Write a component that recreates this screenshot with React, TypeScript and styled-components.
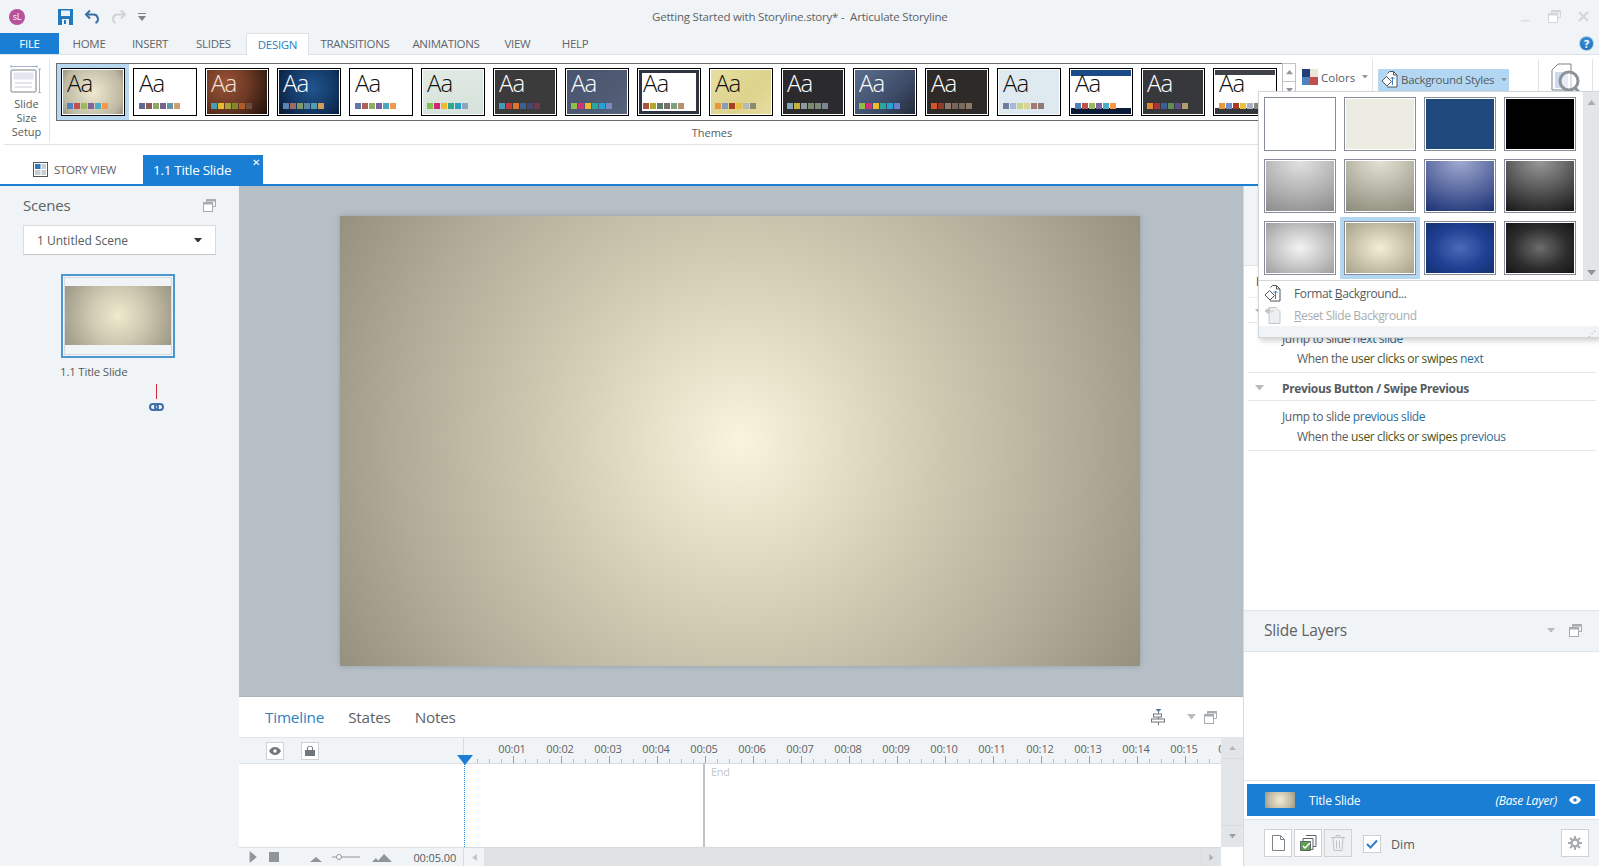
import React from 'react';
import styled, { createGlobalStyle } from 'styled-components';

const GlobalStyle = createGlobalStyle`
  html, body { margin: 0; padding: 0; height: 100%; overflow: hidden; }
  body { font-family: 'Open Sans', 'Liberation Sans', sans-serif; color: #565c61; }
  * { box-sizing: border-box; }
`;

const BLUE = '#1a7fd4';
const PANEL = '#f1f4f6';

const Page = styled.div`
  position: relative;
  width: 1599px;
  height: 866px;
  display: flex;
  flex-direction: column;
  background: #fff;
  overflow: hidden;
  font-size: 12px;
  letter-spacing: -0.3px;
`;

/* title bar */
const TitleBar = styled.div`
  height: 33px;
  flex: none;
  background: ${PANEL};
  display: grid;
  grid-template-columns: 652px 1fr auto;
  align-items: center;
`;
const QuickAccess = styled.div`
  display: flex;
  align-items: center;
  padding-left: 9px;
`;
const Avatar = styled.div`
  width: 16px;
  height: 16px;
  border-radius: 50%;
  background: #b9509f;
  color: #fff;
  font-size: 9px;
  line-height: 16px;
  text-align: center;
  margin-right: 33px;
`;
const QuickIcon = styled.span`
  display: flex;
  margin-right: 11px;
`;
const TitleText = styled.div`
  font-size: 11.5px;
  letter-spacing: -0.2px;
  color: #5d6266;
  white-space: pre;
`;
const WindowButtons = styled.div`
  display: flex;
  gap: 16px;
  padding-right: 9px;
  align-items: center;
`;

/* ribbon tabs */
const TabRow = styled.div`
  height: 22px;
  flex: none;
  background: ${PANEL};
  border-bottom: 1px solid #dfe2e4;
  display: flex;
  align-items: stretch;
  position: relative;
`;
const FileTab = styled.div`
  width: 59px;
  background: ${BLUE};
  color: #fff;
  font-size: 11.5px;
  display: flex;
  align-items: center;
  justify-content: center;
`;
const RibbonTab = styled.div<{ $w: number; $active?: boolean }>`
  width: ${(p) => p.$w}px;
  font-size: 11.5px;
  display: flex;
  align-items: center;
  justify-content: center;
  color: ${(p) => (p.$active ? '#2d7fc1' : '#5f656a')};
  background: ${(p) => (p.$active ? '#fff' : 'transparent')};
  height: ${(p) => (p.$active ? '22px' : 'auto')};
  border: ${(p) => (p.$active ? '1px solid #dfe2e4' : 'none')};
  border-bottom: none;
`;
const HelpBadge = styled.div`
  position: absolute;
  right: 5px;
  top: 3px;
  width: 15px;
  height: 15px;
  border-radius: 50%;
  background: radial-gradient(circle at 50% 35%, #3f97e0, #1664ad);
  border: 1px solid #a9cdea;
  color: #fff;
  font-weight: 700;
  font-size: 11px;
  line-height: 13px;
  text-align: center;
`;

/* ribbon */
const Ribbon = styled.div`
  height: 90px;
  flex: none;
  background: #fff;
  border-bottom: 1px solid #e2e5e7;
  display: flex;
  margin-left: 4px;
`;
const SetupGroup = styled.div`
  width: 46px;
  height: 84px;
  flex: none;
  margin-top: 4px;
  border-right: 1px solid #e2e5e7;
  display: flex;
  flex-direction: column;
  align-items: center;
  padding-top: 6px;
  font-size: 11px;
  line-height: 13.5px;
  letter-spacing: 0;
  text-align: center;
`;
const SetupLabel = styled.div`
  margin-top: 4px;
`;
const SetupCaption = styled.div`
  margin-top: 1px;
`;
const GroupCaption = styled.div`
  font-size: 11px;
  line-height: 14px;
  letter-spacing: 0;
  margin-top: 5px;
`;
const ThemesGroup = styled.div`
  width: 1322px;
  flex: none;
  padding: 8px 4px 0 6px;
  display: flex;
  flex-direction: column;
  align-items: center;
`;
const ThemeRow = styled.div`
  width: 100%;
  display: flex;
`;
const Gallery = styled.div`
  width: 1226px;
  flex: none;
  height: 58px;
  border: 1px solid #6a6a6a;
  border-right: none;
  display: flex;
  align-items: center;
  gap: 8px;
  padding-left: 4px;
  overflow: hidden;
`;
const ThemeCell = styled.div<{ $on?: boolean }>`
  flex: none;
  margin: ${(p) => (p.$on ? '0 -4px' : '0')};
  padding: ${(p) => (p.$on ? '4px' : '0')};
  background: ${(p) => (p.$on ? '#b9d8f0' : 'transparent')};
`;
const ThemeThumb = styled.div<{ $bg: string; $fg: string; $frame?: boolean }>`
  position: relative;
  width: 64px;
  height: 48px;
  border: 1px solid #000;
  outline: 1px solid #fff;
  outline-offset: -2px;
  background: ${(p) => p.$bg};
  color: ${(p) => p.$fg};
  box-shadow: ${(p) => (p.$frame ? 'inset 0 0 0 4px #2f3540' : 'none')};
  padding: 0 0 0 5px;
  font-size: 24px;
  line-height: 27px;
  letter-spacing: -1px;
  font-weight: 300;
`;
const SwatchRow = styled.div`
  position: absolute;
  left: 5px;
  bottom: 6px;
  display: flex;
  gap: 1px;
`;
const Swatch = styled.span<{ $c: string }>`
  width: 6px;
  height: 6px;
  background: ${(p) => p.$c};
`;
const Spinner = styled.div`
  width: 14px;
  height: 58px;
  flex: none;
  border: 1px solid #bfc3c6;
  display: flex;
  flex-direction: column;
`;
const SpinnerButton = styled.div`
  height: 18px;
  border-bottom: 1px solid #bfc3c6;
  display: flex;
  align-items: center;
  justify-content: center;
`;
const ColorsButton = styled.div`
  height: 28px;
  flex: none;
  margin-left: 6px;
  display: flex;
  align-items: center;
  gap: 3px;
  font-size: 11.5px;
  letter-spacing: 0;
`;
const Divider = styled.div`
  width: 1px;
  flex: none;
  height: 84px;
  margin-top: 4px;
  background: #e2e5e7;
`;
const StylesGroup = styled.div`
  width: 165px;
  flex: none;
  padding: 14px 0 0 5px;
`;
const StylesButton = styled.div`
  width: 131px;
  height: 22px;
  background: #b3d7f2;
  display: flex;
  align-items: center;
  gap: 3px;
  padding: 0 0 1px 3px;
  font-size: 11.5px;
  letter-spacing: -0.3px;
  white-space: nowrap;
`;
const PreviewGroup = styled.div`
  width: 53px;
  flex: none;
  padding: 7px 0 0 12px;
`;
const CaretGap = styled.span`
  display: flex;
  margin-left: 4px;
`;

/* slide tab strip */
const ViewStrip = styled.div`
  height: 41px;
  flex: none;
  background: #fff;
  border-bottom: 2px solid ${BLUE};
  display: flex;
  align-items: flex-end;
`;
const StoryViewTab = styled.div`
  width: 143px;
  height: 29px;
  padding-left: 33px;
  display: flex;
  align-items: center;
  gap: 6px;
  font-size: 11.5px;
  color: #5d6266;
`;
const SlideTab = styled.div`
  position: relative;
  width: 120px;
  height: 29px;
  background: ${BLUE};
  color: #fff;
  font-size: 13.5px;
  padding-left: 10px;
  display: flex;
  align-items: center;
`;
const CloseMark = styled.span`
  position: absolute;
  top: 2px;
  right: 3px;
  font-size: 10px;
  line-height: 10px;
`;

/* main area */
const Main = styled.div`
  flex: 1;
  min-height: 0;
  display: flex;
`;
const ScenesPanel = styled.div`
  width: 239px;
  flex: none;
  background: ${PANEL};
  padding: 8px 23px 0;
  display: flex;
  flex-direction: column;
`;
const PanelHeader = styled.div`
  display: flex;
  align-items: center;
  justify-content: space-between;
  font-size: 15px;
  color: #5d6266;
  letter-spacing: -0.2px;
  height: 22px;
`;
const SceneSelect = styled.div`
  margin-top: 9px;
  width: 193px;
  height: 30px;
  background: #fff;
  border: 1px solid #d8dbdd;
  border-bottom-color: #c4c7c9;
  padding: 0 13px;
  font-size: 12px;
  letter-spacing: 0;
  display: flex;
  align-items: center;
  justify-content: space-between;
`;
const SceneThumb = styled.div`
  margin: 19px 0 0 38px;
  width: 114px;
  height: 84px;
  border: 2px solid #4d97cf;
  padding: 1px;
  background: #f1f4f6;
  display: flex;
`;
const SceneThumbInner = styled.div`
  flex: 1;
  border: 1px solid #d8dbdd;
  padding: 8px 0 9px;
  display: flex;
`;
const SceneThumbImage = styled.div`
  flex: 1;
  background: radial-gradient(circle farthest-corner, #efe9cd 0, #cfc9b2 45%, #9b9684 100%);
`;
const SceneLabel = styled.div`
  margin: 6px 0 0 37px;
  font-size: 11.5px;
  letter-spacing: -0.2px;
`;
const SceneLink = styled.div`
  margin-left: 126px;
  margin-top: 5px;
  width: 14px;
  display: flex;
  flex-direction: column;
  align-items: center;
`;
const RedLine = styled.div`
  width: 1px;
  height: 15px;
  background: #d02a36;
  margin-bottom: 4px;
`;

const Center = styled.div`
  width: 1004px;
  flex: none;
  display: flex;
  flex-direction: column;
`;
const Stage = styled.div`
  height: 511px;
  flex: none;
  background: #b6bec6;
  padding: 30px 0 0 101px;
  border-bottom: 1px solid #a9b1b9;
`;
const Slide = styled.div`
  width: 800px;
  height: 450px;
  background: radial-gradient(circle farthest-corner, #f8f4dd 0, #e5e0c8 20%, #cdc7b0 45%, #b0ab97 75%, #96917f 100%);
  box-shadow: 0 0 5px rgba(90, 96, 104, 0.35);
`;

/* timeline */
const TimelinePanel = styled.div`
  flex: 1;
  min-height: 0;
  display: flex;
  flex-direction: column;
  background: #fff;
`;
const TimelineTabs = styled.div`
  height: 40px;
  flex: none;
  display: flex;
  align-items: center;
  padding: 0 26px;
  gap: 24px;
  font-size: 15.3px;
  letter-spacing: -0.2px;
`;
const TimelineTab = styled.div<{ $active?: boolean }>`
  color: ${(p) => (p.$active ? '#2d7fc1' : '#5d6266')};
`;
const TimelineTools = styled.div`
  margin-left: auto;
  display: flex;
  align-items: center;
  gap: 21px;
`;
const ToolPair = styled.div<{ $gap?: number }>`
  display: flex;
  align-items: center;
  gap: ${(p) => p.$gap ?? 8}px;
`;
const TimelineGrid = styled.div`
  position: relative;
  flex: 1;
  min-height: 0;
  display: grid;
  grid-template-columns: 225px 757px 22px;
  grid-template-rows: 27px 83px 1fr;
`;
const TrackHead = styled.div`
  grid-column: 1;
  grid-row: 1;
  background: ${PANEL};
  border-top: 1px solid #e2e5e7;
  border-bottom: 1px solid #e2e5e7;
  border-right: 1px solid #d8dbdd;
  padding: 4px 0 0 27px;
  display: flex;
  gap: 17px;
`;
const SquareToggle = styled.div`
  width: 18px;
  height: 18px;
  background: #fff;
  border: 1px solid #cfd2d4;
  display: flex;
  align-items: center;
  justify-content: center;
`;
const Ruler = styled.div`
  grid-column: 2;
  grid-row: 1;
  background: ${PANEL};
  border-top: 1px solid #e2e5e7;
  border-bottom: 1px solid #d8dbdd;
  overflow: hidden;
  display: flex;
  flex-direction: column;
`;
const RulerLabels = styled.div`
  display: flex;
  padding: 4px 0 0 24px;
  height: 18px;
  flex: none;
`;
const RulerLabel = styled.span`
  flex: none;
  width: 48px;
  text-align: center;
  font-size: 11px;
  letter-spacing: -0.1px;
  line-height: 14px;
  color: #5d6266;
`;
const ScrollTop = styled.div`
  grid-column: 3;
  grid-row: 1 / span 2;
  background: #e3e6e8;
  border-top: 1px solid #e2e5e7;
  display: flex;
  flex-direction: column;
  justify-content: space-between;
`;
const ScrollCap = styled.div`
  height: 21px;
  display: flex;
  align-items: center;
  justify-content: center;
  border-bottom: 1px solid #d8dbdd;
  &:last-child { border-bottom: none; border-top: 1px solid #d8dbdd; height: 22px; }
`;
const TrackBody = styled.div`
  grid-column: 1 / span 2;
  grid-row: 2;
  background: #fff;
`;
const Playhead = styled.div`
  position: absolute;
  left: 225px;
  top: 21px;
  bottom: 19px;
  border-left: 1px dotted #1a7fd4;
`;
const PlayheadCap = styled.div`
  position: absolute;
  left: 218px;
  top: 18px;
  width: 0;
  height: 0;
  border-left: 8px solid transparent;
  border-right: 8px solid transparent;
  border-top: 10px solid ${BLUE};
`;
const EndMarker = styled.div`
  position: absolute;
  left: 464px;
  top: 26px;
  bottom: 19px;
  width: 2px;
  background: #bfc3c6;
`;
const EndLabel = styled.div`
  position: absolute;
  left: 472px;
  top: 27px;
  font-size: 11px;
  color: #c4c7ca;
`;
const TransportBar = styled.div`
  grid-column: 1;
  grid-row: 3;
  background: ${PANEL};
  border-top: 1px solid #dfe2e4;
  border-right: 1px solid #d8dbdd;
  display: flex;
  align-items: center;
  padding-left: 10px;
  overflow: hidden;
`;
const StopIcon = styled.svg`
  margin-left: 12px;
  flex: none;
`;
const ZoomIcon = styled.svg`
  margin-left: 31px;
  flex: none;
`;
const TransportTime = styled.span`
  margin-left: 21px;
  font-size: 11px;
  letter-spacing: -0.1px;
`;
const HScroll = styled.div`
  grid-column: 2;
  grid-row: 3;
  background: #e0e3e5;
  border-top: 1px solid #d8dbdd;
  display: flex;
  justify-content: space-between;
`;
const HScrollCap = styled.div`
  width: 20px;
  background: ${PANEL};
  display: flex;
  align-items: center;
  justify-content: center;
  &:last-child { background: #e0e3e5; border-left: 1px solid #d8dbdd; }
`;

/* right column */
const RightPanel = styled.div`
  flex: 1;
  min-width: 0;
  display: flex;
  flex-direction: column;
  background: #fff;
  border-left: 1px solid #d8dbdd;
`;
const TriggerTop = styled.div`
  height: 80px;
  flex: none;
  background: ${PANEL};
  border-bottom: 1px solid #e2e5e7;
`;
const TriggerArea = styled.div`
  height: 344px;
  flex: none;
  padding: 0 3px 0 4px;
  background: #fff;
`;
const TriggerHeading = styled.div`
  height: 32px;
  font-weight: 700;
  padding-left: 8px;
  display: flex;
  align-items: center;
  border-bottom: 1px solid #eceef0;
`;
const TriggerRow = styled.div<{ $h: number }>`
  height: ${(p) => p.$h}px;
  display: flex;
  align-items: center;
  gap: 18px;
  padding: 3px 0 0 7px;
  font-weight: 700;
  font-size: 12px;
  letter-spacing: -0.35px;
  border-bottom: 1px solid #e6e8ea;
`;
const TriggerBody = styled.div`
  height: 50px;
  padding: 6px 0 0 34px;
  border-bottom: 1px solid #e6e8ea;
  line-height: 20px;
  font-size: 12px;
  letter-spacing: -0.35px;
`;
const TriggerSub = styled.div`
  padding-left: 15px;
`;
const Teal = styled.span`
  color: #2e6c99;
`;
const Olive = styled.span`
  color: #44531a;
`;
const LayersHeader = styled.div`
  height: 42px;
  flex: none;
  margin-top: auto;
  background: ${PANEL};
  border-top: 1px solid #e2e5e7;
  border-bottom: 1px solid #e2e5e7;
  display: flex;
  align-items: center;
  justify-content: space-between;
  padding: 0 17px 2px 20px;
  font-size: 15.5px;
  letter-spacing: -0.2px;
  color: #5d6266;
`;
const LayersBody = styled.div`
  height: 129px;
  flex: none;
  border-bottom: 1px solid #e2e5e7;
`;
const LayerRow = styled.div`
  height: 32px;
  flex: none;
  margin: 3px 4px 3px 3px;
  background: ${BLUE};
  color: #fff;
  display: flex;
  align-items: center;
  padding: 0 14px 0 18px;
  font-size: 12px;
  letter-spacing: -0.2px;
`;
const LayerThumb = styled.div`
  width: 30px;
  height: 16px;
  background: radial-gradient(circle, #f1ecd2 0, #bdb8a2 70%, #99947f 100%);
  margin-right: 14px;
`;
const LayerNote = styled.em`
  margin-left: auto;
  margin-right: 12px;
`;
const LayerTools = styled.div`
  flex: 1;
  background: ${PANEL};
  border-top: 1px solid #e2e5e7;
  display: flex;
  align-items: flex-start;
  padding: 9px 10px 0 20px;
  gap: 2px;
`;
const ToolButton = styled.div<{ $pressed?: boolean }>`
  width: 28px;
  height: 28px;
  background: ${(p) => (p.$pressed ? '#eef0f1' : '#fff')};
  border: 1px solid #cfd2d4;
  display: flex;
  align-items: center;
  justify-content: center;
`;
const DimCheck = styled.div`
  width: 18px;
  height: 18px;
  margin: 6px 0 0 9px;
  background: #fff;
  border: 1px solid #cfd2d4;
  display: flex;
  align-items: center;
  justify-content: center;
`;
const DimLabel = styled.span`
  margin: 7px 0 0 8px;
  font-size: 12.5px;
  letter-spacing: 0;
`;
const GearButton = styled(ToolButton)`
  margin-left: auto;
`;

/* background styles dropdown */
const Dropdown = styled.div`
  position: absolute;
  left: 1258px;
  top: 91px;
  width: 341px;
  height: 247px;
  background: #fff;
  border: 1px solid #d4d7d9;
  border-right: none;
  box-shadow: 2px 3px 5px rgba(0, 0, 0, 0.18);
  display: flex;
  flex-direction: column;
`;
const StyleArea = styled.div`
  height: 189px;
  flex: none;
  border-bottom: 1px solid #d4d7d9;
  display: flex;
`;
const StyleGrid = styled.div`
  width: 324px;
  flex: none;
  padding: 5px 0 0 5px;
  display: grid;
  grid-template-columns: repeat(4, 72px);
  grid-auto-rows: 54px;
  column-gap: 8px;
  row-gap: 8px;
`;
const StyleCell = styled.div<{ $on?: boolean }>`
  position: relative;
  &::before {
    content: '';
    display: ${(p) => (p.$on ? 'block' : 'none')};
    position: absolute;
    inset: -4px;
    background: #b3d7f2;
  }
`;
const StyleThumb = styled.div<{ $bg: string }>`
  position: relative;
  height: 100%;
  border: 1px solid #878d99;
  outline: 1px solid #fff;
  outline-offset: -2px;
  background: ${(p) => p.$bg};
`;
const StyleScroll = styled.div`
  flex: 1;
  background: #e3e6e8;
  display: flex;
  flex-direction: column;
  justify-content: space-between;
  align-items: center;
  padding: 8px 0 5px;
`;
const MenuItem = styled.div<{ $off?: boolean }>`
  height: 22px;
  display: flex;
  align-items: center;
  padding-left: 5px;
  font-size: 12px;
  letter-spacing: -0.38px;
  color: ${(p) => (p.$off ? '#a9adb0' : '#565c61')};
`;
const MenuIcon = styled.span`
  width: 30px;
  flex: none;
  display: flex;
`;
const MenuList = styled.div`
  padding-top: 1px;
  flex: 1;
`;
const Grip = styled.div`
  height: 11px;
  flex: none;
  background: ${PANEL};
  display: flex;
  justify-content: flex-end;
  align-items: flex-end;
  font-size: 8px;
  line-height: 9px;
  color: #9aa0a4;
  padding-right: 3px;
`;

const DownCaret = ({ c = '#8f959a', w = 7 }: { c?: string; w?: number }) => (
  <svg width={w} height={w * 0.6} viewBox="0 0 10 6"><path d="M0 0h10L5 6z" fill={c} /></svg>
);
const UpCaret = ({ c = '#8f959a', w = 7 }: { c?: string; w?: number }) => (
  <svg width={w} height={w * 0.6} viewBox="0 0 10 6"><path d="M0 6h10L5 0z" fill={c} /></svg>
);
const RightCaret = ({ c = '#9aa0a4', h = 7 }: { c?: string; h?: number }) => (
  <svg width={h * 0.7} height={h} viewBox="0 0 6 10"><path d="M0 0v10l6-5z" fill={c} /></svg>
);
const FloatIcon = ({ c = '#a6abaf' }: { c?: string }) => (
  <svg width="13" height="13" viewBox="0 0 13 13" fill="none" stroke={c} strokeWidth="1">
    <path d="M3.500 3V.5h9v7H10" />
    <path d="M3.500 1.500h9" strokeWidth="2" />
    <rect x=".5" y="3.500" width="9" height="9" fill="#fff" />
    <path d="M.5 4.500h9" strokeWidth="2" />
  </svg>
);
const EyeIcon = ({ c = '#6f777d' }: { c?: string }) => (
  <svg width="12" height="8" viewBox="0 0 12 8">
    <path d="M0 4c1.600-2.600 3.600-4 6-4s4.400 1.400 6 4c-1.600 2.600-3.600 4-6 4S1.600 6.600 0 4z" fill={c} />
    <circle cx="6" cy="4" r="1.700" fill={c === '#fff' ? BLUE : '#fff'} />
  </svg>
);
const BucketIcon = () => (
  <svg width="17" height="17" viewBox="0 0 17 17" fill="none" stroke="#4f5559" strokeWidth="1">
    <path d="M6.500 2.500l2-2h4l3.500 3.500v12H6" fill="#fff" />
    <path d="M12.500 .5v3.500H16" />
    <path d="M5.500 5.500l5 5-4.500 4.500-5-5z" fill="#fff" />
    <path d="M11.500 6v8M9.500 8l2-2 2 2" stroke="#3f7fbf" />
  </svg>
);

const themeAccent = ['#4f81bd', '#c0504d', '#9bbb59', '#8064a2', '#4bacc6', '#f79646'];
const themes: { bg: string; fg: string; sw: string[]; frame?: boolean }[] = [
  { bg: 'radial-gradient(circle, #eee9cf 0, #bdb8a2 75%, #8e8a78 100%)', fg: '#111', sw: themeAccent },
  { bg: '#fff', fg: '#111', sw: ['#5c6b8f', '#8e5a55', '#8fa768', '#75658f', '#5e97a8', '#cf9f6d'] },
  { bg: 'radial-gradient(circle at 30% 30%, #9a5236 0, #6e3a25 45%, #1a0e08 100%)', fg: '#f4e6dc', sw: ['#45a0b5', '#e8b932', '#a6a23a', '#7d8a30', '#b05a28', '#6c4e40'] },
  { bg: 'radial-gradient(circle at 55% 40%, #21558f 0, #133a68 50%, #08162b 100%)', fg: '#fff', sw: ['#5b85b0', '#9f6a60', '#7f9a6a', '#5f86a0', '#4f9fb0', '#d99a55'] },
  { bg: '#fff', fg: '#111', sw: ['#5f79ac', '#b0605a', '#92ad5e', '#7d62a0', '#4ca6bf', '#eb9a4f'] },
  { bg: 'linear-gradient(170deg, #e1ebe4, #d5e1da)', fg: '#111', sw: ['#7fbf4e', '#d6237c', '#f0b92c', '#2fa88f', '#2a9fc4', '#8fa3c2'] },
  { bg: '#3b3b3b', fg: '#fff', sw: ['#3f9cbd', '#c63a3a', '#e2742a', '#3d5f92', '#3f4a70', '#6f3a48'] },
  { bg: 'linear-gradient(135deg, #4a5670, #4e5a72 60%, #58647c)', fg: '#fff', sw: ['#8cc04a', '#d3307e', '#f2b92a', '#29a6a0', '#20a4d4', '#7d88bd'] },
  { bg: '#fff', fg: '#111', sw: ['#a9553e', '#b3a72e', '#5c7d6a', '#78706a', '#7ea07e', '#b98f6c'], frame: true },
  { bg: 'linear-gradient(135deg, #e8de9f, #ddd38e 60%, #e6dca0)', fg: '#111', sw: ['#e8963a', '#7f9fbd', '#a8401e', '#e8c13e', '#b4b8b8', '#8a8a70'] },
  { bg: '#2b2b2d', fg: '#fff', sw: ['#7fa6b8', '#c2b23a', '#8c9aa2', '#7b8c66', '#7d8a78', '#7a8595'] },
  { bg: 'linear-gradient(135deg, #5a6f90, #3e4c68 60%, #232b3c)', fg: '#fff', sw: ['#8cc04a', '#d3307e', '#f2b92a', '#29a6a0', '#20a4d4', '#6a80c8'] },
  { bg: '#2e2a28', fg: '#fff', sw: ['#d4552a', '#8e3a2c', '#8a7a70', '#7d6458', '#7a6a5e', '#8c7a68'] },
  { bg: '#dfe9f0', fg: '#111', sw: ['#6f7ea0', '#a9b9d4', '#c9d38c', '#dcd493', '#a67870', '#8f7a78'] },
  { bg: 'linear-gradient(#1c4a86 0 7px, #fff 7px 39px, #0b1b38 39px)', fg: '#111', sw: themeAccent },
  { bg: '#37383b', fg: '#fff', sw: ['#e08a2c', '#a8343a', '#3d5f92', '#5f8f54', '#5a4f80', '#b0a070'] },
  { bg: 'linear-gradient(#3f4249 0 6px, #fff 6px 39px, #33363b 39px)', fg: '#111', sw: ['#e89a3a', '#6f8fc8', '#a83a2a', '#e8c13e', '#a8b2c0', '#8a8a80'] },
];

const grad = (a: string, b: string, c: string) => `radial-gradient(ellipse at 50% 50%, ${a} 0, ${b} 55%, ${c} 100%)`;
const top = (a: string, b: string) => `radial-gradient(ellipse 95% 110% at 50% 0, ${a} 0, ${b} 100%)`;
const backgroundStyles = [
  '#fff',
  '#edece2',
  '#1f497d',
  '#000',
  top('#e4e4e4', '#8e8e8e'),
  top('#e4e3d5', '#8f8d7c'),
  top('#a3abd2', '#1f3578'),
  top('#9b9b9b', '#1b1b1b'),
  grad('#f4f4f4', '#c4c4c4', '#9b9b9b'),
  grad('#f3eed3', '#c8c2a9', '#a39e8a'),
  grad('#4c6bb8', '#1f3f92', '#14306f'),
  grad('#6c6c6c', '#2e2e2e', '#141414'),
];

const seconds = Array.from({ length: 16 }, (_, i) => `00:${String(i + 1).padStart(2, '0')}`);
const rulerTicks = Array.from({ length: 64 }, (_, i) => i);

export default function App() {
  return (
    <Page>
      <GlobalStyle />
      <TitleBar>
        <QuickAccess>
          <Avatar>sL</Avatar>
          <QuickIcon>
            <svg width="15" height="16" viewBox="0 0 15 16">
              <path d="M0 0h15v16H0z" fill="#2278bd" />
              <path d="M3 1.500h9v5.500H3z" fill="#eaf2f8" />
              <path d="M4 10h7v6H4z" fill="#eaf2f8" />
              <path d="M6 11h2v4H6z" fill="#2278bd" />
            </svg>
          </QuickIcon>
          <QuickIcon>
            <svg width="16" height="16" viewBox="0 0 16 16" fill="none" stroke="#3a6ea5" strokeWidth="2">
              <path d="M2.500 5.500h7a4.500 4.500 0 0 1 2 8.500" />
              <path d="M6 1.500l-4 4 4 4" />
            </svg>
          </QuickIcon>
          <QuickIcon>
            <svg width="16" height="16" viewBox="0 0 16 16" fill="none" stroke="#cfd3d6" strokeWidth="2">
              <path d="M13.500 5.500h-7a4.500 4.500 0 0 0-2 8.500" />
              <path d="M10 1.500l4 4-4 4" />
            </svg>
          </QuickIcon>
          <svg width="8" height="8" viewBox="0 0 8 8"><path d="M0 0h8v1H0zM0 3h8L4 8z" fill="#7d8387" /></svg>
        </QuickAccess>
        <TitleText>Getting Started with Storyline.story* -  Articulate Storyline</TitleText>
        <WindowButtons>
          <svg width="13" height="13" viewBox="0 0 13 13"><path d="M2 10h9v1.500H2z" fill="#dcdfe1" /></svg>
          <FloatIcon c="#d3d6d8" />
          <svg width="13" height="13" viewBox="0 0 13 13" stroke="#d3d6d8" strokeWidth="2.200"><path d="M2 2l9 9M11 2l-9 9" /></svg>
        </WindowButtons>
      </TitleBar>

      <TabRow>
        <FileTab>FILE</FileTab>
        <RibbonTab $w={60}>HOME</RibbonTab>
        <RibbonTab $w={62}>INSERT</RibbonTab>
        <RibbonTab $w={65}>SLIDES</RibbonTab>
        <RibbonTab $w={63} $active>DESIGN</RibbonTab>
        <RibbonTab $w={92}>TRANSITIONS</RibbonTab>
        <RibbonTab $w={90}>ANIMATIONS</RibbonTab>
        <RibbonTab $w={53}>VIEW</RibbonTab>
        <RibbonTab $w={62}>HELP</RibbonTab>
        <HelpBadge>?</HelpBadge>
      </TabRow>

      <Ribbon>
        <SetupGroup>
          <svg width="33" height="28" viewBox="0 0 33 28" fill="none">
            <path d="M1 1.500h26M1 0v3M27 0v3M29.500 4v24M28 4h3M28 27.500h3" stroke="#9fb4cc" />
            <rect x="1" y="5" width="25" height="22" rx="1" stroke="#7d8387" />
            <rect x="3.500" y="7.500" width="20" height="7" fill="#e3e6ee" />
            <path d="M5 18h17M5 22h17" stroke="#c9ccd1" />
          </svg>
          <SetupLabel>Slide<br />Size</SetupLabel>
          <SetupCaption>Setup</SetupCaption>
        </SetupGroup>
        <ThemesGroup>
          <ThemeRow>
            <Gallery>
              {themes.map((t, i) => (
                <ThemeCell key={i} $on={i === 0}>
                  <ThemeThumb $bg={t.bg} $fg={t.fg} $frame={t.frame}>
                    Aa
                    <SwatchRow>
                      {t.sw.map((c, k) => <Swatch key={k} $c={c} />)}
                    </SwatchRow>
                  </ThemeThumb>
                </ThemeCell>
              ))}
            </Gallery>
            <Spinner>
              <SpinnerButton><UpCaret /></SpinnerButton>
              <SpinnerButton><DownCaret /></SpinnerButton>
            </Spinner>
            <ColorsButton>
              <svg width="16" height="16" viewBox="0 0 16 16">
                <path d="M0 0h8v8H0z" fill="#1f3f78" />
                <path d="M8 0h8v8H8z" fill="#eee5da" />
                <path d="M0 8h8v8H0z" fill="#4f81bd" />
                <path d="M8 8h8v8H8z" fill="#c0504d" />
              </svg>
              Colors
              <CaretGap><DownCaret w={6} /></CaretGap>
            </ColorsButton>
          </ThemeRow>
          <GroupCaption>Themes</GroupCaption>
        </ThemesGroup>
        <Divider />
        <StylesGroup>
          <StylesButton>
            <BucketIcon />
            Background Styles
            <CaretGap><DownCaret w={6} /></CaretGap>
          </StylesButton>
        </StylesGroup>
        <Divider />
        <PreviewGroup>
          <svg width="32" height="36" viewBox="0 0 32 36" fill="none">
            <path d="M1 8l6-6h13v26H1z" fill="#fff" stroke="#7d8387" />
            <path d="M4 10h13v16H4z" fill="#cfd9ee" />
            <circle cx="18" cy="19" r="9" fill="#fff" fillOpacity=".5" stroke="#8d9399" strokeWidth="3" />
            <path d="M24 26l7 7" stroke="#8d9399" strokeWidth="3" />
          </svg>
        </PreviewGroup>
        <Divider />
      </Ribbon>

      <ViewStrip>
        <StoryViewTab>
          <svg width="15" height="15" viewBox="0 0 15 15">
            <rect x=".5" y=".5" width="14" height="14" fill="#fff" stroke="#4f5559" />
            <path d="M2 2h5.500v5H2z" fill="#2a79bd" />
            <path d="M8.500 2H13v5H8.500z" fill="#c9ccd1" />
            <path d="M2 8h5.500v5H2zM8.500 8H13v5H8.500z" fill="#c9ccd1" />
          </svg>
          STORY VIEW
        </StoryViewTab>
        <SlideTab>
          1.1 Title Slide
          <CloseMark>✕</CloseMark>
        </SlideTab>
      </ViewStrip>

      <Main>
        <ScenesPanel>
          <PanelHeader>Scenes<FloatIcon /></PanelHeader>
          <SceneSelect>1 Untitled Scene<DownCaret c="#33383c" w={8} /></SceneSelect>
          <SceneThumb>
            <SceneThumbInner><SceneThumbImage /></SceneThumbInner>
          </SceneThumb>
          <SceneLabel>1.1 Title Slide</SceneLabel>
          <SceneLink>
            <RedLine />
            <svg width="15" height="8" viewBox="0 0 15 8" fill="none" stroke="#3f6fa8" strokeWidth="2">
              <rect x="1" y="1" width="8" height="6" rx="3" />
              <rect x="6" y="1" width="8" height="6" rx="3" />
            </svg>
          </SceneLink>
        </ScenesPanel>

        <Center>
          <Stage><Slide /></Stage>
          <TimelinePanel>
            <TimelineTabs>
              <TimelineTab $active>Timeline</TimelineTab>
              <TimelineTab>States</TimelineTab>
              <TimelineTab>Notes</TimelineTab>
              <TimelineTools>
                <svg width="15" height="16" viewBox="0 0 15 16" fill="none" stroke="#6f777d">
                  <path d="M7.500 2v14" />
                  <path d="M4.500 0h6L7.500 3z" fill="#4f75a8" stroke="none" />
                  <rect x="2.500" y="5" width="8" height="3" fill="#fff" />
                  <rect x=".5" y="10" width="13" height="3" fill="#fff" />
                </svg>
                <ToolPair>
                  <DownCaret w={9} c="#b8bcc0" />
                  <FloatIcon />
                </ToolPair>
              </TimelineTools>
            </TimelineTabs>
            <TimelineGrid>
              <TrackHead>
                <SquareToggle><EyeIcon /></SquareToggle>
                <SquareToggle>
                  <svg width="10" height="10" viewBox="0 0 10 10" fill="#6f777d">
                    <path d="M0 4h10v6H0z" />
                    <path d="M2.500 4V2a2.500 2 0 0 1 5 0v2" fill="none" stroke="#6f777d" />
                  </svg>
                </SquareToggle>
              </TrackHead>
              <Ruler>
                <RulerLabels>
                  {seconds.map((s) => <RulerLabel key={s}>{s}</RulerLabel>)}
                </RulerLabels>
                <svg width="757" height="7" viewBox="0 0 757 7">
                  {rulerTicks.map((i) => (
                    <rect key={i} x={i * 12 + 1} y={i % 4 === 0 ? 0 : 3} width="1" height={i % 4 === 0 ? 7 : 4} fill={i % 4 === 0 ? '#9aa0a4' : '#b8bcc0'} />
                  ))}
                </svg>
              </Ruler>
              <ScrollTop>
                <ScrollCap><UpCaret c="#b0b5b9" /></ScrollCap>
                <ScrollCap><DownCaret c="#9aa0a4" /></ScrollCap>
              </ScrollTop>
              <TrackBody />
              <TransportBar>
                <RightCaret c="#8f959a" h={12} />
                <StopIcon width="10" height="10" viewBox="0 0 10 10"><path d="M0 0h10v10H0z" fill="#8f959a" /></StopIcon>
                <ZoomIcon width="82" height="12" viewBox="0 0 82 12" fill="#8f959a">
                  <path d="M0 11l6-5 6 5z" />
                  <circle cx="29" cy="6" r="2.500" fill="#fff" stroke="#8f959a" />
                  <path d="M22 6h4M32 6h18" stroke="#8f959a" />
                  <path d="M62 11l4-4 3 4zM67 11l7-8 8 8z" />
                </ZoomIcon>
                <TransportTime>00:05.00</TransportTime>
              </TransportBar>
              <HScroll>
                <HScrollCap><svg width="5" height="7" viewBox="0 0 5 7"><path d="M5 0v7L0 3.500z" fill="#c3c7ca" /></svg></HScrollCap>
                <HScrollCap><RightCaret c="#aeb3b7" /></HScrollCap>
              </HScroll>
              <Playhead />
              <PlayheadCap />
              <EndMarker />
              <EndLabel>End</EndLabel>
            </TimelineGrid>
          </TimelinePanel>
        </Center>

        <RightPanel>
          <TriggerTop />
          <TriggerArea>
            <TriggerHeading>Player Triggers</TriggerHeading>
            <TriggerRow $h={25}><DownCaret w={9} c="#b8bcc0" />Next Button / Swipe Next</TriggerRow>
            <TriggerBody>
              Jump to slide <Teal>next slide</Teal>
              <TriggerSub>When the <Olive>user clicks or swipes</Olive> <Teal>next</Teal></TriggerSub>
            </TriggerBody>
            <TriggerRow $h={28}><DownCaret w={9} c="#b8bcc0" />Previous Button / Swipe Previous</TriggerRow>
            <TriggerBody>
              Jump to slide <Teal>previous slide</Teal>
              <TriggerSub>When the <Olive>user clicks or swipes</Olive> <Teal>previous</Teal></TriggerSub>
            </TriggerBody>
          </TriggerArea>
          <LayersHeader>
            Slide Layers
            <ToolPair $gap={14}><DownCaret w={8} c="#b8bcc0" /><FloatIcon /></ToolPair>
          </LayersHeader>
          <LayersBody />
          <LayerRow>
            <LayerThumb />
            Title Slide
            <LayerNote>(Base Layer)</LayerNote>
            <EyeIcon c="#fff" />
          </LayerRow>
          <LayerTools>
            <ToolButton>
              <svg width="13" height="16" viewBox="0 0 13 16" fill="none" stroke="#7d8387"><path d="M.5.5h8l4 4v11H.5z" /><path d="M8.500.5v4h4" /></svg>
            </ToolButton>
            <ToolButton>
              <svg width="17" height="16" viewBox="0 0 17 16" fill="none" stroke="#5f6569">
                <path d="M6 .5h10v11H13" />
                <path d="M3 3.500h10v11H3z" fill="#fff" />
                <path d="M.5 6.500h10v9H.5z" fill="#5fa04e" />
                <path d="M3 11l2 2 5-5" stroke="#fff" strokeWidth="1.500" />
              </svg>
            </ToolButton>
            <ToolButton $pressed>
              <svg width="14" height="16" viewBox="0 0 14 16" fill="none" stroke="#bfc3c6"><path d="M0 2.500h14M5 2V.5h4V2M2 3l1 12.500h8L12 3M5.500 5.500v8M8.500 5.500v8" /></svg>
            </ToolButton>
            <DimCheck>
              <svg width="12" height="10" viewBox="0 0 12 10" fill="none" stroke="#2a7fc9" strokeWidth="2"><path d="M1 5l3.500 3.500L11 1.500" /></svg>
            </DimCheck>
            <DimLabel>Dim</DimLabel>
            <GearButton>
              <svg width="14" height="14" viewBox="0 0 14 14" fill="none" stroke="#a6abaf">
                <circle cx="7" cy="7" r="3.500" strokeWidth="2.500" />
                <path d="M7 0v3M7 11v3M0 7h3M11 7h3M2 2l2 2M10 10l2 2M12 2l-2 2M4 10l-2 2" strokeWidth="2" />
              </svg>
            </GearButton>
          </LayerTools>
        </RightPanel>
      </Main>

      <Dropdown>
        <StyleArea>
          <StyleGrid>
            {backgroundStyles.map((bg, i) => (
              <StyleCell key={i} $on={i === 9}><StyleThumb $bg={bg} /></StyleCell>
            ))}
          </StyleGrid>
          <StyleScroll>
            <UpCaret c="#a9aeb2" w={9} />
            <DownCaret c="#8f959a" w={9} />
          </StyleScroll>
        </StyleArea>
        <MenuList>
          <MenuItem><MenuIcon><BucketIcon /></MenuIcon><span>Format <u>B</u>ackground...</span></MenuItem>
          <MenuItem $off>
            <MenuIcon>
              <svg width="17" height="17" viewBox="0 0 17 17" fill="none" stroke="#c4c7ca">
                <path d="M5 .5h7l4 4v12H5z" fill="#eceef0" />
                <path d="M1 4l4-3v6zM4 4h6" fill="#c4c7ca" />
              </svg>
            </MenuIcon>
            <span><u>R</u>eset Slide Background</span>
          </MenuItem>
        </MenuList>
        <Grip>⋰</Grip>
      </Dropdown>
    </Page>
  );
}
